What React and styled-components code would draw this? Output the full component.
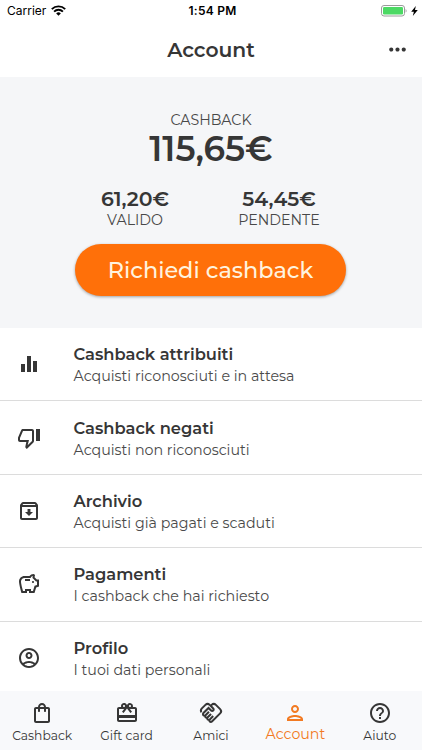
import React from 'react';
import styled, { createGlobalStyle } from 'styled-components';
import {
  MdEqualizer,
  MdHelpOutline,
  MdMoreHoriz,
  MdOutlineAccountCircle,
  MdOutlineArchive,
  MdOutlineCardGiftcard,
  MdOutlineHandshake,
  MdOutlinePerson,
  MdOutlineSavings,
  MdOutlineShoppingBag,
  MdOutlineThumbDown,
} from 'react-icons/md';

const GlobalStyle = createGlobalStyle`
  * {
    box-sizing: border-box;
  }
  body {
    margin: 0;
    background: #ffffff;
    color: #363636;
    font-family: Montserrat, Inter, 'Open Sans', sans-serif;
  }
`;

const Screen = styled.div`
  display: flex;
  flex-direction: column;
  height: 750px;
  overflow: hidden;
`;

const StatusBar = styled.div`
  flex: none;
  display: grid;
  grid-template-columns: 1fr auto 1fr;
  align-items: center;
  height: 22px;
  padding: 0 4px 0 7px;
  color: #000000;
  font-family: Inter, Roboto, sans-serif;
  font-size: 12px;
  line-height: 22px;
`;

const Carrier = styled.div`
  display: flex;
  align-items: center;
  gap: 5px;
  svg {
    margin-bottom: 2px;
  }
`;

const Clock = styled.div`
  font-weight: 600;
  letter-spacing: 0.25px;
`;

const Power = styled.div`
  display: flex;
  align-items: center;
  justify-content: flex-end;
  gap: 4px;
`;

const Header = styled.header`
  flex: none;
  display: grid;
  grid-template-columns: 1fr auto 1fr;
  align-items: center;
  height: 55px;
  padding: 0 12px;
`;

const Title = styled.h1`
  grid-column: 2;
  margin: 0;
  font-size: 20.3px;
  line-height: 24px;
  font-weight: 600;
`;

const MoreButton = styled.button`
  justify-self: end;
  display: flex;
  padding: 0;
  border: 0;
  background: none;
  color: #363636;
`;

const Summary = styled.section`
  flex: none;
  display: flex;
  flex-direction: column;
  align-items: center;
  height: 251px;
  padding-top: 34px;
  background: #f5f6f8;
`;

const Label = styled.div`
  color: #484848;
  font-size: 14.2px;
  line-height: 18px;
`;

const Total = styled.div`
  margin-top: -1px;
  font-size: 34.4px;
  line-height: 42px;
  font-weight: 600;
`;

const Balances = styled.div`
  display: grid;
  grid-template-columns: 144px 144px;
  margin: 16px 8px 0 0;
  text-align: center;
`;

const Amount = styled.div`
  font-size: 20.5px;
  line-height: 25px;
  font-weight: 600;
`;

const RequestButton = styled.button`
  width: 271px;
  height: 52px;
  margin: 15px 1px 0 0;
  padding: 0 0 1px;
  border: 0;
  border-radius: 26px;
  background: #ff7009;
  color: #fff3df;
  box-shadow: 0 1px 3px rgba(0, 0, 0, 0.35);
  font-family: inherit;
  font-size: 22.4px;
  font-weight: 500;
`;

const Menu = styled.main`
  flex: 1;
  min-height: 0;
  overflow: hidden;
`;

const MenuItem = styled.div`
  display: grid;
  grid-template-columns: 56.5px 1fr;
  align-items: center;
  height: 73.4px;
  padding: 2px 0 0 17px;
  border-bottom: 1px solid #dcdcdc;
  svg {
    display: block;
    margin-bottom: 2px;
  }
`;

const ItemTitle = styled.div`
  font-size: 16.3px;
  line-height: 22px;
  font-weight: 600;
`;

const ItemText = styled.div`
  color: #4a4a4a;
  font-size: 14.25px;
  line-height: 22px;
`;

const TabBar = styled.nav`
  flex: none;
  display: grid;
  grid-template-columns: repeat(5, 1fr);
  height: 59px;
  background: #f8f9fb;
`;

const Tab = styled.div`
  display: flex;
  flex-direction: column;
  align-items: center;
  padding-top: 10px;
  color: ${({ $active }) => ($active ? '#f27a22' : '#363636')};
  font-size: ${({ $active }) => ($active ? '14.2px' : '12.3px')};
  line-height: ${({ $active }) => ($active ? '18px' : '21px')};
`;

const items = [
  { icon: MdEqualizer, title: 'Cashback attribuiti', text: 'Acquisti riconosciuti e in attesa' },
  { icon: MdOutlineThumbDown, title: 'Cashback negati', text: 'Acquisti non riconosciuti' },
  { icon: MdOutlineArchive, title: 'Archivio', text: 'Acquisti già pagati e scaduti' },
  { icon: MdOutlineSavings, title: 'Pagamenti', text: 'I cashback che hai richiesto' },
  { icon: MdOutlineAccountCircle, title: 'Profilo', text: 'I tuoi dati personali' },
];

const tabs = [
  { icon: MdOutlineShoppingBag, name: 'Cashback' },
  { icon: MdOutlineCardGiftcard, name: 'Gift card' },
  { icon: MdOutlineHandshake, name: 'Amici' },
  { icon: MdOutlinePerson, name: 'Account', active: true },
  { icon: MdHelpOutline, name: 'Aiuto' },
];

function WifiIcon() {
  return (
    <svg width="15" height="11" viewBox="0 0 15 11" fill="none" stroke="#000" strokeWidth="1.9">
      <path d="M.8 4.1a9.6 9.6 0 0 1 13.4 0" />
      <path d="M3.1 6.6a6.3 6.3 0 0 1 8.8 0" />
      <path d="M7.5 10.7 5.2 8.4a3.3 3.3 0 0 1 4.6 0z" fill="#000" stroke="none" />
    </svg>
  );
}

function BatteryIcon() {
  return (
    <svg width="26" height="12" viewBox="0 0 26 12">
      <rect x=".5" y=".5" width="23" height="10.5" rx="2.5" fill="#fff" stroke="#9b9b9b" />
      <rect x="2" y="2" width="20" height="7.5" rx="1.2" fill="#4cd964" />
      <path d="M24.6 4v3.6c1.3-.5 1.3-3.1 0-3.6z" fill="#9b9b9b" />
    </svg>
  );
}

function BoltIcon() {
  return (
    <svg width="7" height="10" viewBox="0 0 7 10">
      <path d="M4.8 0 .2 5.7h2.7L1.8 10l5-6H4z" fill="#000" />
    </svg>
  );
}

export default function App() {
  return (
    <Screen>
      <GlobalStyle />
      <StatusBar>
        <Carrier>
          Carrier
          <WifiIcon />
        </Carrier>
        <Clock>1:54 PM</Clock>
        <Power>
          <BatteryIcon />
          <BoltIcon />
        </Power>
      </StatusBar>
      <Header>
        <Title>Account</Title>
        <MoreButton aria-label="Altro">
          <MdMoreHoriz size={25} />
        </MoreButton>
      </Header>
      <Summary>
        <Label>CASHBACK</Label>
        <Total>115,65€</Total>
        <Balances>
          <div>
            <Amount>61,20€</Amount>
            <Label>VALIDO</Label>
          </div>
          <div>
            <Amount>54,45€</Amount>
            <Label>PENDENTE</Label>
          </div>
        </Balances>
        <RequestButton>Richiedi cashback</RequestButton>
      </Summary>
      <Menu>
        {items.map(({ icon: Icon, title, text }) => (
          <MenuItem key={title}>
            <Icon size={24} />
            <div>
              <ItemTitle>{title}</ItemTitle>
              <ItemText>{text}</ItemText>
            </div>
          </MenuItem>
        ))}
      </Menu>
      <TabBar>
        {tabs.map(({ icon: Icon, name, active }) => (
          <Tab key={name} $active={active}>
            <Icon size={24} />
            {name}
          </Tab>
        ))}
      </TabBar>
    </Screen>
  );
}
